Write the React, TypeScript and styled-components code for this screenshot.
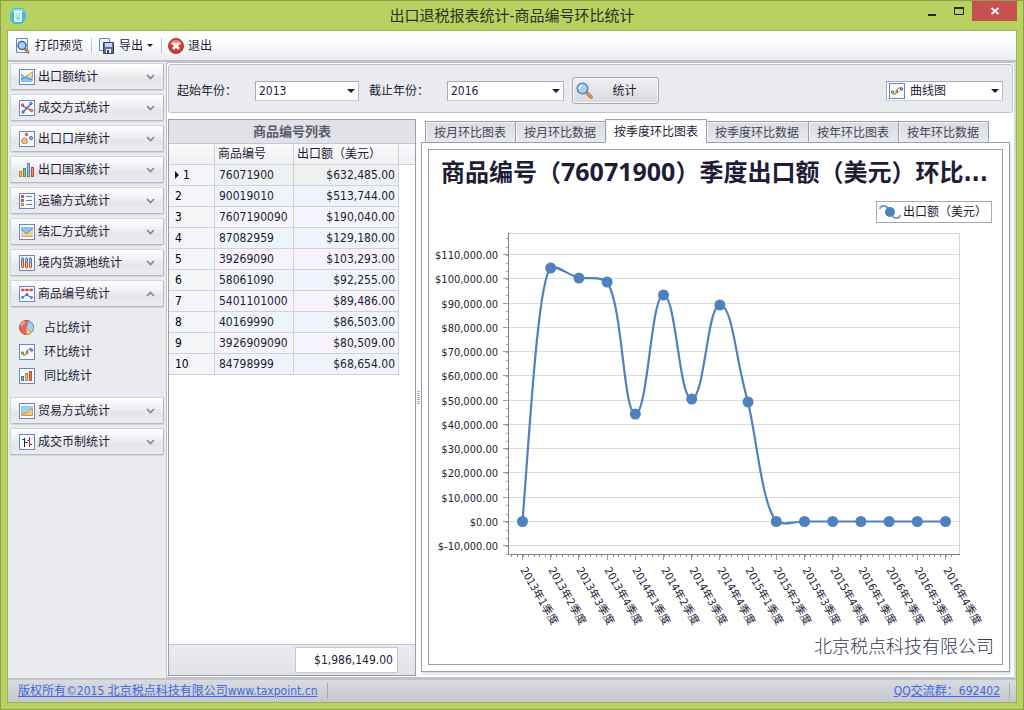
import React, { useState } from "react";
import styled, { createGlobalStyle, css } from "styled-components";

const font = `"DejaVu Sans Condensed", "Noto Sans CJK SC", sans-serif`;

const Global = createGlobalStyle`
  *, *::before, *::after { box-sizing: border-box; }
  body { margin: 0; font: 12px/16px ${font}; color: #1e1c36; }
  button, select { font: inherit; color: inherit; }
`;

const Window = styled.div`
  min-height: 100vh;
  display: flex;
  flex-direction: column;
  background: #b9d160;
  border: 1px solid #8fa04a;
  padding: 0 6px 6px;
`;

const TitleBar = styled.header`
  height: 29px;
  display: grid;
  grid-template-columns: 1fr auto 1fr;
  align-items: start;
`;

const AppLogo = styled.div`
  padding: 6px 0 0 3px;
  svg { display: block; }
`;

const AppTitle = styled.h1`
  margin: 0;
  padding-top: 4px;
  font: 15px/22px ${font};
  color: #2c3020;
`;

const WindowButtons = styled.div`
  display: flex;
  justify-content: flex-end;
`;

const WindowButton = styled.button<{ $close?: boolean }>`
  width: ${(p) => (p.$close ? 45 : 27)}px;
  height: 20px;
  padding: 0;
  border: 0;
  background: ${(p) => (p.$close ? "#c75050" : "transparent")};
  display: flex;
  align-items: center;
  justify-content: center;
`;

const Client = styled.div`
  flex: 1;
  display: flex;
  flex-direction: column;
  border: 1px solid #9eb24f;
  background: #e2e3e8;
`;

const Toolbar = styled.nav`
  height: 31px;
  display: flex;
  align-items: center;
  padding: 0 7px;
  background: linear-gradient(#ffffff, #fbfcfd 45%, #e9ebf1);
  border-bottom: 2px solid #bdbec8;
`;

const ToolButton = styled.button`
  display: flex;
  align-items: center;
  gap: 4px;
  height: 24px;
  padding: 0;
  border: 0;
  background: none;
`;

const ToolLine = styled.span`
  width: 1px;
  height: 15px;
  margin: 0 6px 0 8px;
  background: #c3c4cd;
`;

const Arrow = styled.span`
  border: 3px solid transparent;
  border-top-color: #1e1c36;
  border-bottom: 0;
`;

const Body = styled.div`
  flex: 1;
  display: flex;
`;

const Sidebar = styled.aside`
  flex: 0 0 158px;
  display: flex;
  flex-direction: column;
  gap: 4px;
  padding: 1px 2px;
  background: #eaebef;
`;

const GroupButton = styled.button`
  display: flex;
  align-items: center;
  gap: 3px;
  width: 100%;
  height: 27px;
  padding: 0 8px;
  text-align: left;
  background: linear-gradient(#ffffff, #f0f1f4 40%, #e5e6ea 60%, #ececf0);
  border: 1px solid #d4d5dc;
  border-bottom-color: #b6b7c1;
  border-right-color: #b6b7c1;
  border-radius: 2px;
  box-shadow: 0 1px 1px #d5d6dc;
  span { flex: 1; }
`;

const SubList = styled.ul`
  margin: 0;
  padding: 5px 0 5px 9px;
  list-style: none;
`;

const SubButton = styled.button`
  display: flex;
  align-items: center;
  gap: 9px;
  height: 24px;
  padding: 0;
  border: 0;
  background: none;
`;

const Main = styled.main`
  flex: 1;
  min-width: 0;
  display: flex;
  flex-direction: column;
  background: #fff;
  border: 1px solid #c0c1cb;
  border-right: 2px solid #d6d7de;
  border-radius: 3px;
`;

const Filters = styled.form`
  height: 49px;
  display: flex;
  align-items: center;
  padding: 4px 9px 0 8px;
  background: #eaebef;
  border: 1px solid #c0c1cb;
  border-radius: 3px;
  margin: 1px 1px 0;
`;

const Field = styled.div`
  display: flex;
  align-items: center;
  flex: none;
  & + & { margin-left: 10px; }
`;

const FieldLabel = styled.label`
  width: 78px;
`;

const SelectBox = styled.span<{ $width: number }>`
  position: relative;
  flex: none;
  width: ${(p) => p.$width}px;
  height: 20px;
  ${Arrow} {
    position: absolute;
    right: 4px;
    top: 8px;
    border-width: 4px 4px 0;
    pointer-events: none;
  }
  > svg {
    position: absolute;
    left: 3px;
    top: 2px;
    pointer-events: none;
  }
`;

const Select = styled.select<{ $icon?: boolean }>`
  display: block;
  appearance: none;
  width: 100%;
  height: 20px;
  padding: 0 16px 0 ${(p) => (p.$icon ? 23 : 3)}px;
  background: #fff;
  border: 1px solid #a9aab8;
  border-bottom-color: #cfd0d8;
  border-right-color: #b9bac5;
  border-radius: 0;
`;

const StatButton = styled.button`
  display: grid;
  grid-template-columns: 18px 1fr;
  align-items: center;
  flex: none;
  width: 87px;
  height: 27px;
  margin: 0 auto 0 8px;
  padding: 0 3px;
  border: 1px solid #a9aab6;
  border-radius: 3px;
  box-shadow: inset 0 0 0 1px #f6f6f8;
  background: linear-gradient(#f1f1f4, #e4e4e9 50%, #d9dae0);
`;

const Workspace = styled.div`
  flex: 1;
  display: flex;
  padding: 6px 4px 1px 1px;
`;

const ListPanel = styled.section`
  flex: 0 0 248px;
  display: flex;
  flex-direction: column;
  border: 1px solid #9c9dac;
`;

const ListTitle = styled.h2`
  margin: 0;
  height: 24px;
  font: bold 13px/24px ${font};
  color: #5c5c6c;
  text-align: center;
  background: #e1e2e7;
  border-bottom: 1px solid #c5c6d0;
`;

const Table = styled.table`
  width: 100%;
  table-layout: fixed;
  border-collapse: separate;
  border-spacing: 0;
  th, td {
    height: 21px;
    padding: 0 3px 0 4px;
    border-right: 1px solid #cfd2dc;
    border-bottom: 1px solid #cfd2dc;
    white-space: nowrap;
  }
  th { font-weight: normal; text-align: left; }
  thead th { background: linear-gradient(#fbfbfc, #f0f1f4); padding-left: 3px; }
  thead th:last-child { border-right: 0; }
  tbody th { background: #f3f5f7; padding-left: 6px; color: #000; }
  td:last-child { border: 0; }
`;

const Row = styled.tr<{ $current: boolean; $odd: boolean }>`
  td { background: ${(p) => (p.$current ? "#eff0f0" : p.$odd ? "#eff4fa" : "#f6f3fd")}; }
  td:last-child { background: #fff; }
`;

const Num = styled.td`
  text-align: right;
`;

const RowMark = styled.span`
  display: inline-block;
  margin-right: 4px;
  border: 4px solid transparent;
  border-left-color: #1e1c36;
  border-right: 0;
`;

const ListFooter = styled.div`
  margin-top: auto;
  height: 31px;
  padding: 2px 17px 2px 0;
  border-top: 1px solid #c5c6d0;
  background: linear-gradient(#ebecf0, #e1e2e7);
  display: flex;
  justify-content: flex-end;
`;

const Total = styled.output`
  width: 103px;
  height: 26px;
  line-height: 25px;
  padding-right: 4px;
  text-align: right;
  background: #fff;
  border: 1px solid #c5c6d0;
`;

const Splitter = styled.div`
  flex: 0 0 5px;
  display: flex;
  align-items: center;
  justify-content: center;
  &::before {
    content: "";
    width: 3px;
    height: 13px;
    background: repeating-linear-gradient(#a4a5b2 0 1px, #fff 1px 2px);
  }
`;

const ChartSide = styled.section`
  flex: 1;
  min-width: 0;
  display: flex;
  flex-direction: column;
  padding-bottom: 4px;
`;

const Tabs = styled.div`
  display: flex;
  align-items: flex-end;
  height: 24px;
  padding-left: 4px;
  margin-bottom: -1px;
  position: relative;
`;

const Tab = styled.button<{ $active: boolean }>`
  flex: none;
  height: 22px;
  padding: 1px 9px 0 8px;
  border: 1px solid #9c9dac;
  margin-right: -1px;
  white-space: nowrap;
  color: #46465a;
  background: linear-gradient(#dcdde2, #e8e9ed);
  box-shadow: inset 1px 1px 0 #f4f4f7;
  ${(p) =>
    p.$active &&
    css`
      height: 24px;
      padding: 1px 8px 0;
      color: #1e1c36;
      background: #fff;
      border-bottom-color: #fff;
    `}
`;

const TabPanel = styled.div`
  flex: 1;
  display: flex;
  padding: 6px;
  border: 1px solid #9c9dac;
  box-shadow: 1px 2px 2px #dcdce2;
`;

const ChartFrame = styled.figure`
  flex: 1;
  min-width: 0;
  display: flex;
  flex-direction: column;
  margin: 0;
  border: 1px solid #9c9dac;
`;

const ChartTitle = styled.figcaption`
  font: bold 24px/36px ${font};
  padding: 3px 12px 0;
  white-space: nowrap;
  span { font-family: "Noto Sans", sans-serif; font-size: 25px; }
`;

const Legend = styled.div`
  align-self: flex-end;
  display: flex;
  align-items: center;
  gap: 2px;
  height: 22px;
  margin: 10px 10px 7px 0;
  padding: 0 4px 0 2px;
  border: 1px solid #aaaaad;
`;

const Plot = styled.svg`
  display: block;
  width: 100%;
  text { font-family: ${font}; font-size: 11px; fill: #1e1c36; }
`;

const Company = styled.div`
  margin-top: auto;
  padding: 0 8px 4px;
  font-size: 18px;
  line-height: 26px;
  font-weight: 300;
  text-align: right;
  color: #3a394c;
`;

const StatusBar = styled.footer`
  height: 24px;
  display: flex;
  justify-content: space-between;
  align-items: center;
  padding: 0 6px 0 10px;
  border-top: 2px solid #c0c1cb;
  background: linear-gradient(#dadbe0, #c6c7cd);
`;

const StatusItem = styled.span`
  display: flex;
  align-items: center;
  padding-right: 9px;
  border-right: 1px solid #a6a7b0;
  a { color: #4169e1; }
`;

type IconName =
  | "area" | "cross" | "bubble" | "bars" | "list" | "mail" | "tubes" | "dots"
  | "pie" | "spline" | "columns" | "land" | "candle";

const glyphs: Record<IconName, React.ReactNode> = {
  area: (
    <>
      <path d="M7 7.500L13.500 2.500V9" fill="#f9d6a4" stroke="#d9933f" />
      <path d="M2 5l4 3.500L13.500 8v5H2z" fill="#8fc3e8" />
      <path d="M2 5l4 3.500L13.500 11M2 10.500l4-2 3-1.500" fill="none" stroke="#4b8fc4" />
    </>
  ),
  cross: (
    <>
      <path d="M3 5.500l4.500 2.500L12 10.500" stroke="#c8372f" strokeWidth="1.200" fill="none" />
      <path d="M4 12l4-4 4-4.500" stroke="#2f68ba" strokeWidth="1.200" fill="none" />
      <g fill="#f0a097" stroke="#c8372f"><circle cx="3.500" cy="5" r="1.200" /><circle cx="12.500" cy="10.500" r="1.200" /></g>
      <g fill="#8fbcf0" stroke="#2f68ba"><circle cx="12" cy="3.500" r="1.200" /><circle cx="4" cy="12" r="1.200" /></g>
    </>
  ),
  bubble: (
    <>
      <circle cx="5.500" cy="10" r="2.800" fill="#f6c478" stroke="#c97a35" />
      <circle cx="7.500" cy="3.500" r="1.200" fill="#e87565" stroke="#c8372f" />
      <circle cx="12" cy="7" r="1.600" fill="#8ebfe8" stroke="#4b7fc4" />
    </>
  ),
  bars: (
    <>
      <rect x=".5" y="9.500" width="2" height="5" fill="#f6c478" stroke="#c98035" />
      <rect x="4.500" y="6.500" width="2" height="8" fill="#9cc36d" stroke="#5d8f34" />
      <rect x="8.500" y="1.500" width="2" height="13" fill="#8fc4ee" stroke="#4a86c0" />
      <rect x="12.500" y="5.500" width="2" height="9" fill="#ee8b77" stroke="#c8452f" />
    </>
  ),
  list: (
    <>
      <path d="M7 3.500h6M7 7.500h6M7 11.500h6" stroke="#6d84b5" />
      <rect x="2" y="2" width="3" height="3" fill="#d9503f" />
      <rect x="2" y="6" width="3" height="3" fill="#4380cc" />
      <rect x="2" y="10" width="3" height="3" fill="#dc8a2c" />
    </>
  ),
  mail: (
    <>
      <rect x="2" y="3" width="12" height="10" fill="#f8cf94" />
      <path d="M2 3h12v2l-6 5-6-5z" fill="#8cc3e8" />
      <path d="M2 5l5 4.500h1L14 4" stroke="#659bc0" fill="none" />
      <path d="M2 12.500h12" stroke="#e1a352" />
    </>
  ),
  tubes: (
    <>
      {[2.5, 6.5, 10.5].map((x, i) => (
        <g key={x}>
          <rect x={x} y="3" width="2" height="10" rx="1" fill="#f6c9a0" stroke="#c7502c" />
          <rect x={x} y="3" width="2" height={3 + i} rx="1" fill="#a4cdf2" stroke="#3f80c6" />
        </g>
      ))}
    </>
  ),
  dots: (
    <>
      <path d="M3 4h10" stroke="#c8372f" />
      <path d="M3 12l4-3h1l5 3" stroke="#2f68ba" fill="none" />
      <g fill="#ef8c7c" stroke="#c8372f"><circle cx="3.500" cy="4" r="1" /><circle cx="8" cy="4" r="1" /><circle cx="12.500" cy="4" r="1" /></g>
      <g fill="#6aa5e5" stroke="#2f68ba"><circle cx="3.500" cy="11.500" r="1" /><circle cx="8" cy="8.500" r="1" /><circle cx="12.500" cy="11.500" r="1" /></g>
    </>
  ),
  pie: (
    <>
      <circle cx="7.500" cy="7.500" r="7" fill="#dd6a5c" stroke="#b5493f" />
      <path d="M7.500 7.500L9.500.8A7 7 0 0 1 12.500 12.500z" fill="#9fd0ef" stroke="#6a9fc4" />
      <path d="M7.500 7.500l5 5a7 7 0 0 1-5 2z" fill="#f8cb8c" stroke="#d09a50" />
      <path d="M2 6a6 6 0 0 1 4-4" stroke="#f3a79d" strokeWidth="2" fill="none" />
    </>
  ),
  spline: (
    <>
      <path d="M3 9q1 3 3 2t2-3 2-3 3 1" stroke="#5f6f2d" fill="none" />
      <circle cx="3.500" cy="9" r="1.200" fill="#b4cf70" stroke="#5b8a2e" />
      <circle cx="8" cy="8.500" r="1.200" fill="#f1a05d" stroke="#c25a2f" />
      <circle cx="12.500" cy="6" r="1.200" fill="#7fb2ea" stroke="#2f68ba" />
    </>
  ),
  columns: (
    <>
      <rect x="2.500" y="8.500" width="2" height="4" fill="#75b0e6" stroke="#3c77b8" />
      <rect x="6.500" y="5.500" width="2" height="7" fill="#f6c478" stroke="#c98035" />
      <rect x="10.500" y="3.500" width="2" height="9" fill="#ee8b77" stroke="#c8452f" />
    </>
  ),
  land: (
    <>
      <rect x="2" y="3" width="12" height="10" fill="#9ccdeb" />
      <path d="M2.500 10q2 2 5 0l2-2q1-2 4-2v6.500h-11z" fill="#f7c583" stroke="#d9963f" />
    </>
  ),
  candle: (
    <>
      <path d="M5.500 4v9M3.500 5.500h2M5.500 8.500h3" stroke="#242636" fill="none" />
      <path d="M10.500 3v10M8.500 6.500h2M10.500 10.500H13" stroke="#c02427" fill="none" />
    </>
  ),
};

const unframed: IconName[] = ["bars", "pie"];

function Icon({ name }: { name: IconName }) {
  return (
    <svg width="16" height="16" viewBox="0 0 16 16" aria-hidden="true">
      {!unframed.includes(name) && <rect x=".5" y=".5" width="15" height="15" fill="#f6f9fe" stroke="#6e86c0" />}
      {glyphs[name]}
    </svg>
  );
}

function Chevron({ up }: { up?: boolean }) {
  return (
    <svg width="9" height="6" viewBox="0 0 9 6" aria-hidden="true">
      <path d={up ? "M1 5l3.500-3.500L8 5" : "M1 1l3.500 3.500L8 1"} fill="none" stroke="#858693" strokeWidth="1.700" />
    </svg>
  );
}

function Magnifier() {
  return (
    <svg width="17" height="17" viewBox="0 0 17 17" aria-hidden="true">
      <path d="M10 10l5 5" stroke="#b96a35" strokeWidth="3.500" strokeLinecap="round" />
      <path d="M11 11l4 4" stroke="#f2a661" strokeWidth="1.500" strokeLinecap="round" />
      <circle cx="6.500" cy="6.500" r="5.300" fill="#a9d1f4" stroke="#5c85c2" strokeWidth="1.500" />
      <path d="M3.500 7a3 3 0 0 1 3-3.500" stroke="#eef7ff" strokeWidth="1.600" fill="none" />
    </svg>
  );
}

const groups: { name: string; icon: IconName }[] = [
  { name: "出口额统计", icon: "area" },
  { name: "成交方式统计", icon: "cross" },
  { name: "出口口岸统计", icon: "bubble" },
  { name: "出口国家统计", icon: "bars" },
  { name: "运输方式统计", icon: "list" },
  { name: "结汇方式统计", icon: "mail" },
  { name: "境内货源地统计", icon: "tubes" },
  { name: "商品编号统计", icon: "dots" },
  { name: "贸易方式统计", icon: "land" },
  { name: "成交币制统计", icon: "candle" },
];

const reports: { name: string; icon: IconName }[] = [
  { name: "占比统计", icon: "pie" },
  { name: "环比统计", icon: "spline" },
  { name: "同比统计", icon: "columns" },
];

const rows = [
  ["76071900", "$632,485.00"],
  ["90019010", "$513,744.00"],
  ["7607190090", "$190,040.00"],
  ["87082959", "$129,180.00"],
  ["39269090", "$103,293.00"],
  ["58061090", "$92,255.00"],
  ["5401101000", "$89,486.00"],
  ["40169990", "$86,503.00"],
  ["3926909090", "$80,509.00"],
  ["84798999", "$68,654.00"],
];

const tabNames = ["按月环比图表", "按月环比数据", "按季度环比图表", "按季度环比数据", "按年环比图表", "按年环比数据"];

const axis = { left: 79, right: 530, top: 3, bottom: 324, zero: 291, perTick: 24.27, firstX: 93.5, stepX: 28.2 };
const ticks = Array.from({ length: 13 }, (_, i) => i - 1);
const quarters = [2013, 2014, 2015, 2016].flatMap((y) => [1, 2, 3, 4].map((q) => `${y}年${q}季度`));
const pointY = [291, 37.5, 47.5, 51.5, 183.5, 64.5, 168.5, 74.5, 171.5, 291, 291, 291, 291, 291, 291, 291];
const curve =
  "M93.5 291.5C101 195 109 52 121.5 38C127 34 139 45 150 48C159 49 170 46 178 52C194 75 194 183 206.5 184" +
  "C219 183 222 65 234.500 65C247 65 250 168 262.500 169C276 168 278 75 291 75C304 76 306 128 319 172" +
  "C328 210 333 275 347.500 291.5C355 296 364 291.5 375.500 291.5H516.5";

const money = (tick: number) =>
  "$" + (tick * 10000).toLocaleString("en-US", { minimumFractionDigits: 2 });

function SplineChart() {
  const yAt = (v: number) => Math.round(axis.zero - v * axis.perTick) + 0.5;
  const xAt = (i: number) => axis.firstX + i * axis.stepX;
  return (
    <Plot viewBox="0 0 573 400" role="img" aria-label="季度出口额（美元）">
      <path d={`M${axis.left} 3.5H530.5V${axis.bottom}`} fill="none" stroke="#d3d3d3" />
      {ticks.map((t) => (
        <g key={t}>
          <path d={`M${axis.left} ${yAt(t)}H${axis.right}`} stroke="#dcdcdc" />
          <path d={`M74 ${yAt(t)}H79`} stroke="#9b9b9f" />
          <text x="69" y={yAt(t) + 4} textAnchor="end">{money(t)}</text>
        </g>
      ))}
      {Array.from({ length: 40 }, (_, i) => axis.bottom - i * (axis.perTick / 3)).map((y) => (
        <path key={y} d={`M77 ${Math.round(y) + 0.5}h2`} stroke="#aaaaae" />
      ))}
      {Array.from({ length: 79 }, (_, i) => Math.round(axis.firstX + (i - 2) * (axis.stepX / 5)) + 0.5).map((x) => (
        <path key={x} d={`M${x} 325v2`} stroke="#9b9b9f" />
      ))}
      <path d="M79.500 3V324.500H531" fill="none" stroke="#7f7f84" />
      {quarters.map((q, i) => (
        <g key={q}>
          <path d={`M${Math.floor(xAt(i)) + 0.5} 325v5`} stroke="#9b9b9f" />
          <text transform={`translate(${Math.round(xAt(i)) - 3} 340) rotate(60)`}>{q}</text>
        </g>
      ))}
      <path d={curve} fill="none" stroke="#4f81bc" strokeWidth="2.200" />
      {pointY.map((y, i) => (
        <circle key={i} cx={xAt(i)} cy={y + 0.5} r="5.500" fill="#4f81bc" />
      ))}
    </Plot>
  );
}

export default function App() {
  const [open, setOpen] = useState("商品编号统计");
  const [tab, setTab] = useState(tabNames[2]);
  return (
    <Window>
      <Global />
      <TitleBar>
        <AppLogo>
          <svg width="16" height="17" viewBox="0 0 16 17" aria-hidden="true">
            <path d="M4 1h8l3 3 1 5-2 6-3 2H4l-3-3-1-6 2-5z" fill="#35bdee" />
            <path d="M4 2h8l2 3H2z" fill="#8be2fb" />
            <rect x="4.500" y="4.500" width="7" height="10" rx="1" fill="#ddf7ff" stroke="#f6ffff" />
            <path d="M6 7h1M9 7h1M7 9h2M6 11h4M7 13h2" stroke="#48b7df" />
          </svg>
        </AppLogo>
        <AppTitle>出口退税报表统计-商品编号环比统计</AppTitle>
        <WindowButtons>
          <WindowButton type="button" aria-label="最小化">
            <svg width="8" height="10" viewBox="0 0 8 10"><path d="M0 9h8" stroke="#26281c" strokeWidth="2" /></svg>
          </WindowButton>
          <WindowButton type="button" aria-label="最大化">
            <svg width="10" height="8" viewBox="0 0 10 8"><path d="M.5 0v7.500h9V0" fill="none" stroke="#26281c" /><path d="M0 1h10" stroke="#26281c" strokeWidth="2" /></svg>
          </WindowButton>
          <WindowButton type="button" $close aria-label="关闭">
            <svg width="8" height="8" viewBox="0 0 8 8"><path d="M.5 1l7 6M7.500 1l-7 6" stroke="#fff" strokeWidth="1.800" /></svg>
          </WindowButton>
        </WindowButtons>
      </TitleBar>

      <Client>
        <Toolbar>
          <ToolButton type="button">
            <svg width="16" height="16" viewBox="0 0 16 16" aria-hidden="true">
              <path d="M1.500.5h11v14h-11z" fill="#f4f8fe" stroke="#6d87bd" />
              <path d="M9 10l5 5" stroke="#c27b3a" strokeWidth="2.600" />
              <circle cx="7" cy="7.500" r="4" fill="#a9d3f5" stroke="#3d6ba9" strokeWidth="1.500" />
            </svg>
            打印预览
          </ToolButton>
          <ToolLine />
          <ToolButton type="button">
            <svg width="17" height="16" viewBox="0 0 17 16" aria-hidden="true">
              <path d="M1.500.5h10v12h-10z" fill="#f4f8fe" stroke="#6d87bd" />
              <path d="M5.500 4.500h10v11h-10z" fill="#5a6f94" stroke="#2f4366" />
              <path d="M7 5h7v4H7z" fill="#c3d3ea" />
              <path d="M8 11h5v4H8z" fill="#f2f4f8" />
              <path d="M9 12h2v3H9z" fill="#34486c" />
            </svg>
            导出
            <Arrow />
          </ToolButton>
          <ToolLine />
          <ToolButton type="button">
            <svg width="16" height="16" viewBox="0 0 16 16" aria-hidden="true">
              <circle cx="8" cy="8" r="7.500" fill="#cf3a34" stroke="#a33a38" />
              <path d="M2 6a6.500 6.500 0 0 1 12 0q-6 3-12 0z" fill="#e58a80" />
              <path d="M5 5l6 6M11 5l-6 6" stroke="#fff" strokeWidth="2.800" />
            </svg>
            退出
          </ToolButton>
        </Toolbar>

        <Body>
          <Sidebar>
            {groups.map((g) => (
              <React.Fragment key={g.name}>
                <GroupButton type="button" aria-expanded={open === g.name} onClick={() => setOpen(g.name)}>
                  <Icon name={g.icon} />
                  <span>{g.name}</span>
                  <Chevron up={open === g.name} />
                </GroupButton>
                {open === g.name && (
                  <SubList>
                    {reports.map((r) => (
                      <li key={r.name}>
                        <SubButton type="button"><Icon name={r.icon} />{r.name}</SubButton>
                      </li>
                    ))}
                  </SubList>
                )}
              </React.Fragment>
            ))}
          </Sidebar>

          <Main>
            <Filters onSubmit={(e) => e.preventDefault()}>
              <Field>
                <FieldLabel htmlFor="from-year">起始年份：</FieldLabel>
                <SelectBox $width={104}>
                  <Select id="from-year" defaultValue="2013"><option>2013</option><option>2014</option></Select>
                  <Arrow />
                </SelectBox>
              </Field>
              <Field>
                <FieldLabel htmlFor="to-year">截止年份：</FieldLabel>
                <SelectBox $width={117}>
                  <Select id="to-year" defaultValue="2016"><option>2015</option><option>2016</option></Select>
                  <Arrow />
                </SelectBox>
              </Field>
              <StatButton type="submit"><Magnifier />统计</StatButton>
              <SelectBox $width={117}>
                <Select $icon aria-label="图表类型" defaultValue="曲线图"><option>曲线图</option><option>柱状图</option></Select>
                <Icon name="spline" />
                <Arrow />
              </SelectBox>
            </Filters>

            <Workspace>
              <ListPanel>
                <ListTitle>商品编号列表</ListTitle>
                <Table>
                  <colgroup>
                    <col width="46" /><col width="79" /><col width="105" /><col />
                  </colgroup>
                  <thead>
                    <tr><th /><th scope="col">商品编号</th><th scope="col">出口额（美元）</th><th /></tr>
                  </thead>
                  <tbody>
                    {rows.map(([code, amount], i) => (
                      <Row key={code} $current={i === 0} $odd={i % 2 === 1}>
                        <th scope="row">{i === 0 && <RowMark />}{i + 1}</th>
                        <td>{code}</td>
                        <Num>{amount}</Num>
                        <td />
                      </Row>
                    ))}
                  </tbody>
                </Table>
                <ListFooter><Total>$1,986,149.00</Total></ListFooter>
              </ListPanel>
              <Splitter />
              <ChartSide>
                <Tabs role="tablist">
                  {tabNames.map((t) => (
                    <Tab key={t} type="button" role="tab" aria-selected={t === tab} $active={t === tab} onClick={() => setTab(t)}>
                      {t}
                    </Tab>
                  ))}
                </Tabs>
                <TabPanel role="tabpanel">
                  <ChartFrame>
                    <ChartTitle>商品编号（<span>76071900</span>）季度出口额（美元）环比...</ChartTitle>
                    <Legend>
                      <svg width="22" height="16" viewBox="0 0 22 16" aria-hidden="true">
                        <path d="M1 5q0-3 4-3 3 0 5 4M12 9q2 5 5 5 4 0 4-3" fill="none" stroke="#6f9bcb" strokeWidth="1.800" />
                        <circle cx="11" cy="8" r="5" fill="#4f81bc" />
                      </svg>
                      出口额（美元）
                    </Legend>
                    <SplineChart />
                    <Company>北京税点科技有限公司</Company>
                  </ChartFrame>
                </TabPanel>
              </ChartSide>
            </Workspace>
          </Main>
        </Body>

        <StatusBar>
          <StatusItem><a href="#site">版权所有©2015 北京税点科技有限公司www.taxpoint.cn</a></StatusItem>
          <StatusItem><a href="#qq">QQ交流群：692402</a></StatusItem>
        </StatusBar>
      </Client>
    </Window>
  );
}
